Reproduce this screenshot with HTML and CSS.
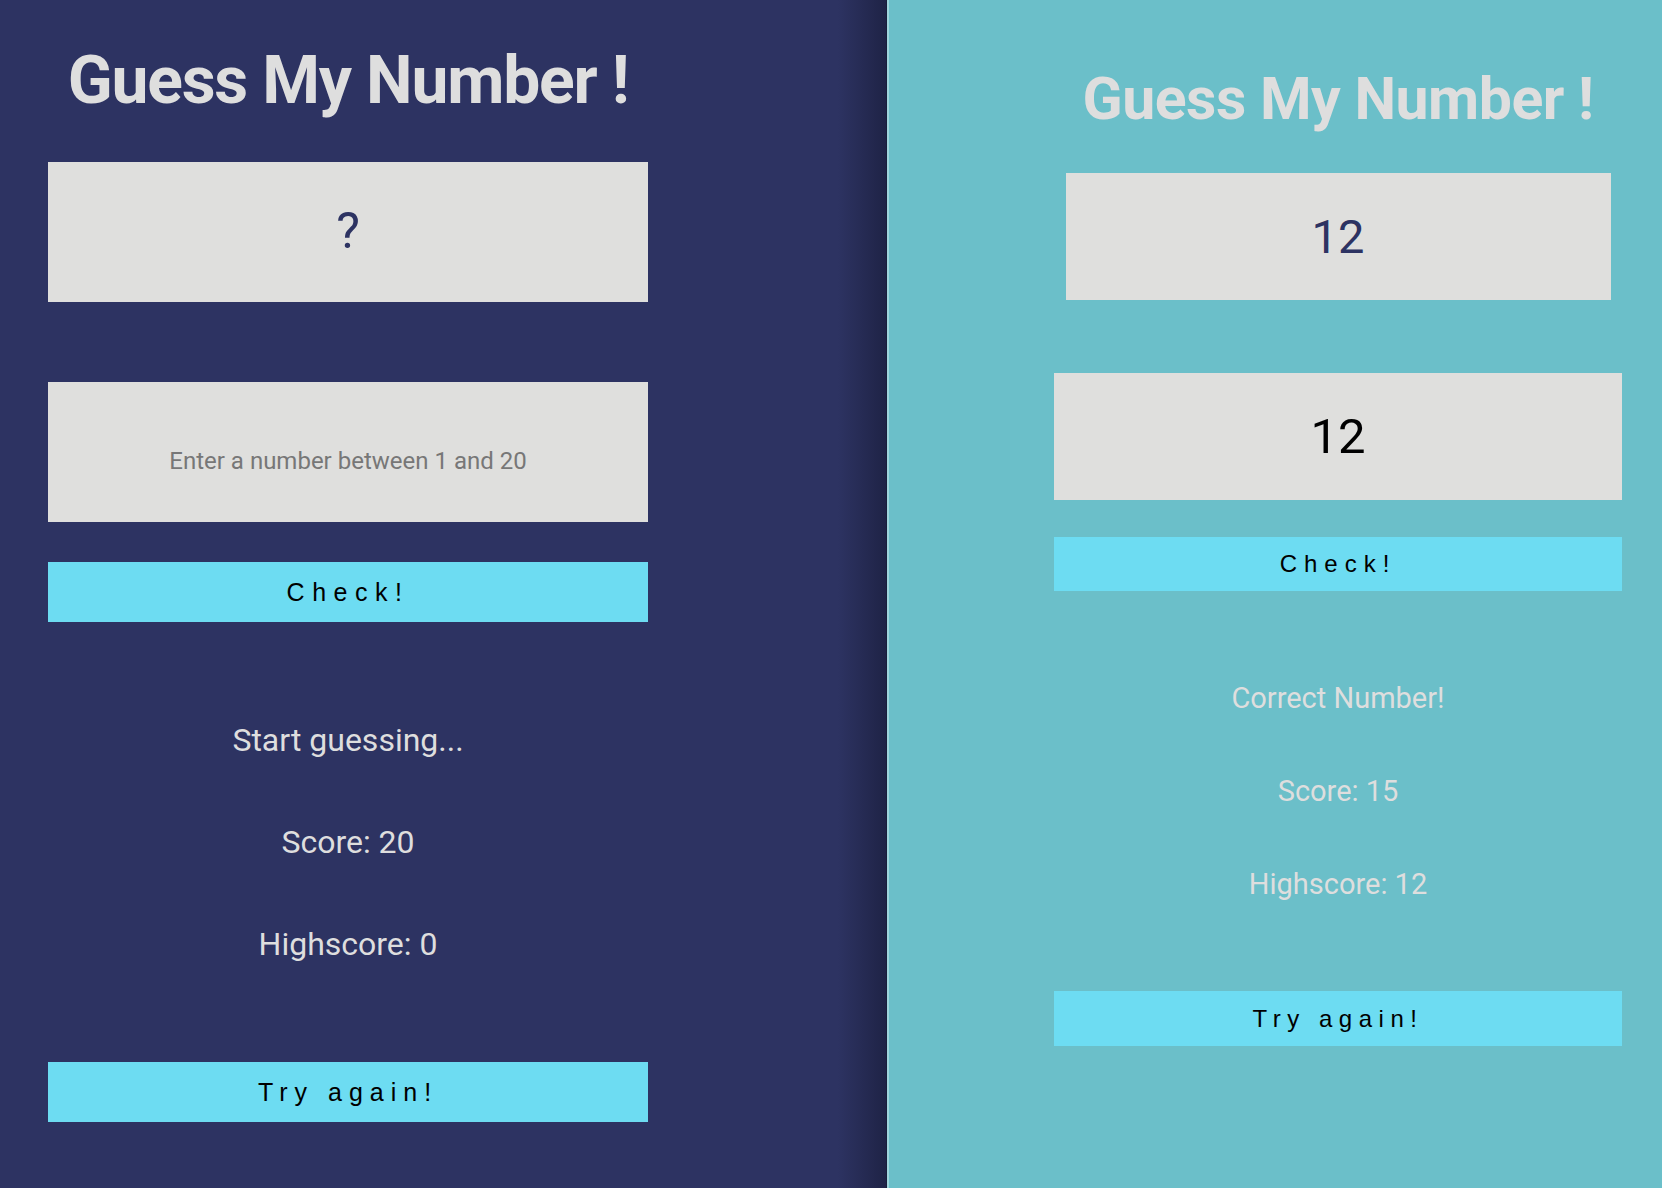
FILE: index.html
```html
<!DOCTYPE html>
<html lang="en">
<head>
<meta charset="utf-8">
<title>Guess My Number!</title>
<link rel="stylesheet" href="styles.css">
</head>
<body>
<div class="screen">
  <section class="game game--start">
    <div class="col">
      <h1 class="title">Guess My Number !</h1>
      <div class="secret">?</div>
      <input class="guess" type="text" placeholder="Enter a number between 1 and 20">
      <button class="btn btn--check">Check!</button>
      <div class="info">
        <p class="line">Start guessing...</p>
        <p class="line">Score: 20</p>
        <p class="line">Highscore: 0</p>
      </div>
      <button class="btn btn--again">Try again!</button>
    </div>
  </section>
  <section class="game game--win">
    <div class="col">
      <h1 class="title">Guess My Number !</h1>
      <div class="secret">12</div>
      <input class="guess" type="text" value="12">
      <button class="btn btn--check">Check!</button>
      <div class="info">
        <p class="line">Correct Number!</p>
        <p class="line">Score: 15</p>
        <p class="line">Highscore: 12</p>
      </div>
      <button class="btn btn--again">Try again!</button>
    </div>
  </section>
</div>
</body>
</html>
```
FILE: styles.css
```css
* { box-sizing: border-box; }
html, body { margin: 0; padding: 0; }
body {
  font-family: Roboto, "Noto Sans", sans-serif;
  width: 1662px;
  height: 1188px;
  overflow: hidden;
}
.screen {
  display: flex;
  height: 1188px;
}
.game { height: 100%; }
.col {
  display: flex;
  flex-direction: column;
}
.title {
  margin: 0;
  font-weight: 700;
  line-height: 1;
  color: #dedede;
  text-align: center;
  white-space: nowrap;
}
.secret {
  background: #dfdfdd;
  display: flex;
  align-items: center;
  justify-content: center;
  color: #2d3362;
  line-height: 1;
}
.guess {
  display: block;
  width: 100%;
  border: none;
  outline: none;
  background: #dfdfdd;
  font-family: Roboto, "Noto Sans", sans-serif;
  text-align: center;
  color: #000;
  padding: 0;
  margin: 0;
}
.guess::placeholder { color: #777; }
.btn {
  display: block;
  width: 100%;
  border: none;
  margin: 0;
  padding: 0;
  background: #6ddcf2;
  color: #000;
  font-family: "Liberation Sans", Arial, sans-serif;
  text-align: center;
}
.info { display: flex; flex-direction: column; }
.line {
  margin: 0;
  text-align: center;
  color: #dedede;
}

/* ---------- left: start state ---------- */
.game--start {
  width: 887px;
  flex: none;
  background: linear-gradient(to right, #2d3362 0, #2d3362 838px, #1f2346 886px, #15182f 887px);
  padding: 48px 0 0 48px;
}
.game--start .col { width: 600px; }
.game--start .title { font-size: 66px; height: 66px; letter-spacing: -1.2px; }
.game--start .secret {
  margin-top: 48px;
  height: 140px;
  font-size: 50px;
  padding-bottom: 2px;
}
.game--start .guess {
  margin-top: 80px;
  height: 140px;
  padding-top: 17px;
  font-size: 24px;
}
.game--start .btn--check {
  margin-top: 40px;
  height: 60px;
  font-size: 25px;
  letter-spacing: 7.5px;
}
.game--start .info { margin: 67px 0; }
.game--start .line {
  height: 102px;
  line-height: 102px;
  font-size: 32px;
}
.game--start .btn--again {
  height: 60px;
  font-size: 25px;
  letter-spacing: 7px;
}

/* ---------- right: win state ---------- */
.game--win {
  flex: 1;
  background: #6bbfc9;
  border-left: 2px solid #9fd5dc;
  padding: 69px 0 0 165px;
}
.game--win .col { width: 568px; }
.game--win .title { font-size: 59px; height: 59px; letter-spacing: -0.5px; }
.game--win .secret {
  align-self: center;
  width: 545px;
  margin-top: 45px;
  height: 127px;
  font-size: 47px;
}
.game--win .guess {
  margin-top: 73px;
  height: 127px;
  font-size: 49px;
}
.game--win .btn--check {
  margin-top: 37px;
  height: 54px;
  font-size: 24px;
  letter-spacing: 7px;
}
.game--win .info { margin: 61px 0 60px; }
.game--win .line {
  height: 93px;
  line-height: 93px;
  font-size: 29px;
}
.game--win .btn--again {
  height: 55px;
  font-size: 24px;
  letter-spacing: 6.5px;
}
```
